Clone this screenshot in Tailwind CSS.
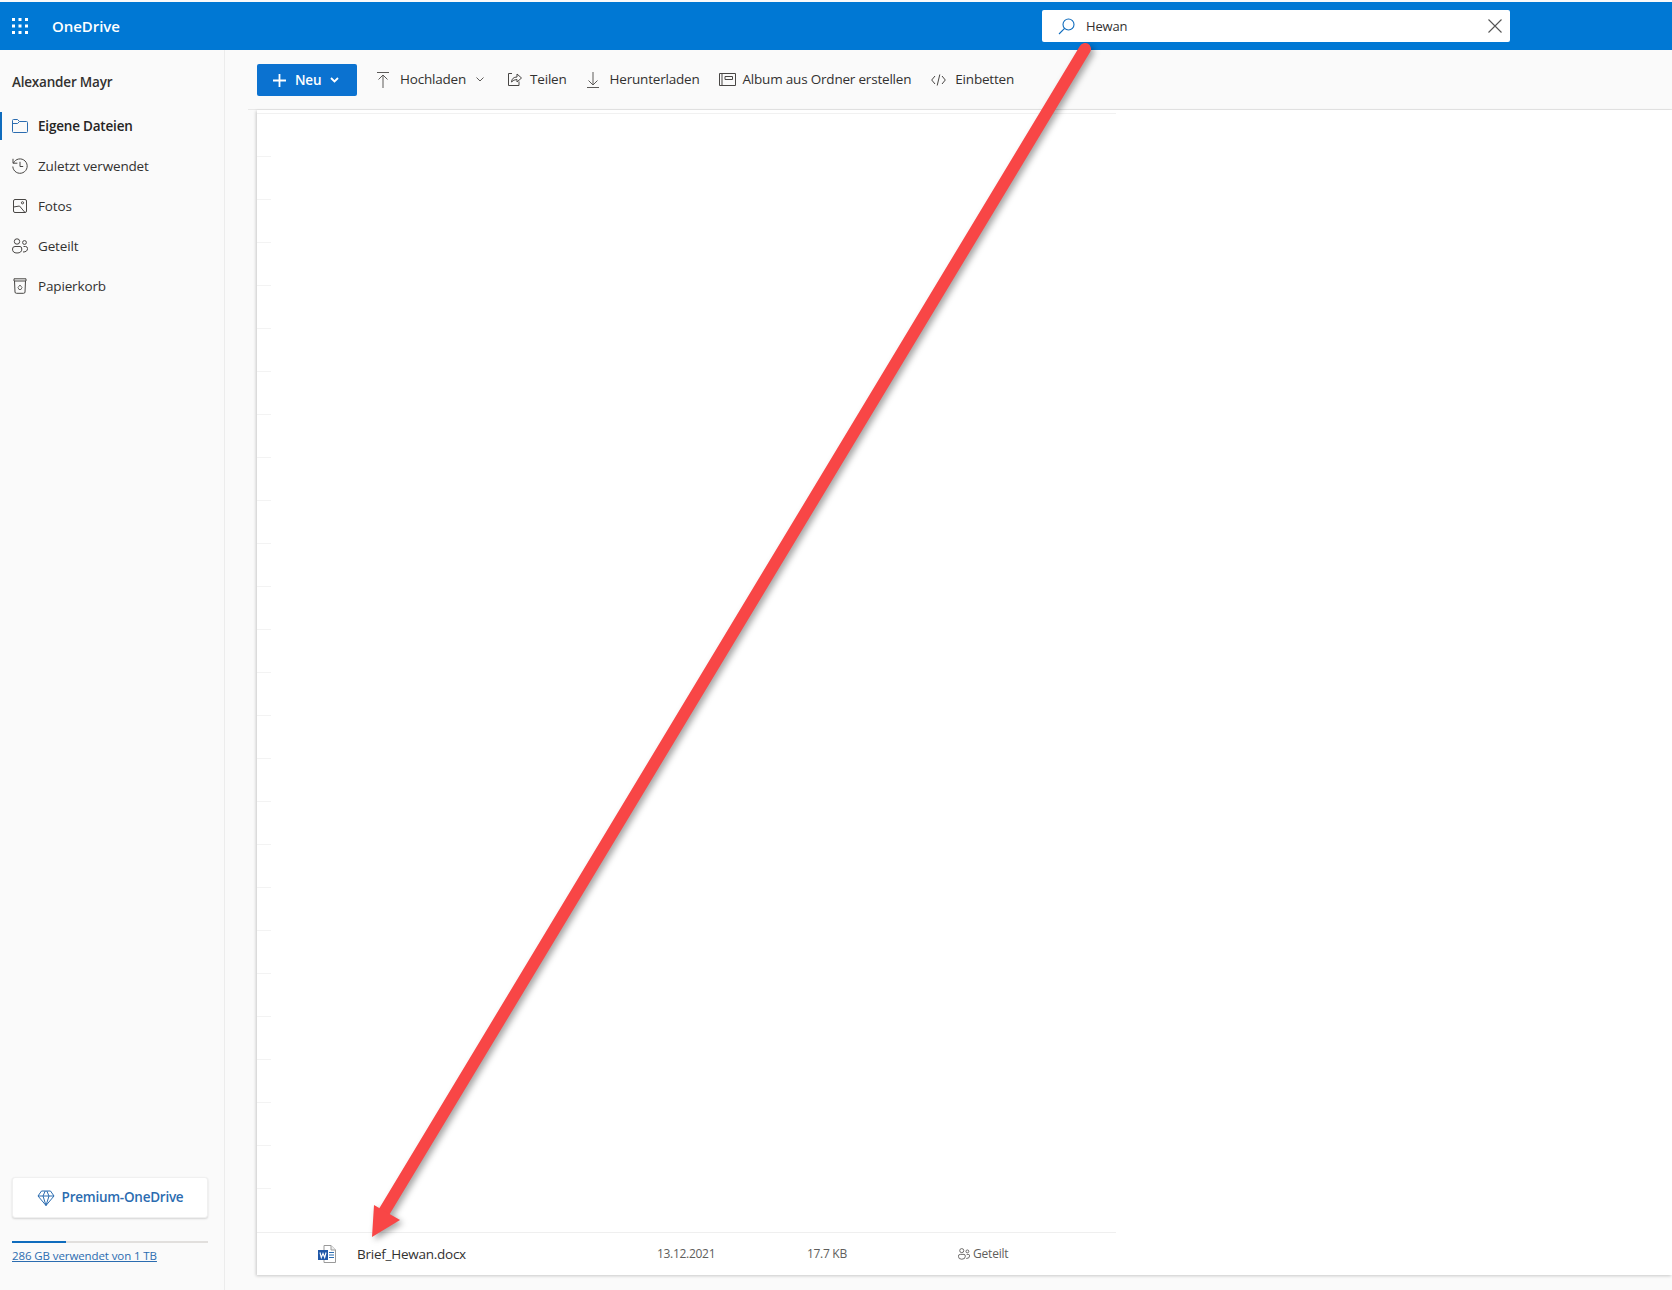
<!DOCTYPE html>
<html lang="de">
<head>
    <meta charset="UTF-8">
    <meta name="viewport" content="width=device-width, initial-scale=1.0">
    <title>OneDrive</title>
    <script src="https://cdn.jsdelivr.net/npm/@tailwindcss/browser@4"></script>
</head>
<body class="relative h-[1290px] w-[1672px] overflow-hidden bg-[#fafafa] font-['Open_Sans',sans-serif] text-[#323130]">

    <!-- header -->
    <header class="mt-[2px] flex h-[48px] items-center bg-[#0078d4] text-white">
        <svg class="ml-[12px] h-[16px] w-[16px]" viewBox="0 0 16 16" fill="#fff">
            <rect x="0" y="0" width="3" height="3"/><rect x="6.5" y="0" width="3" height="3"/><rect x="13" y="0" width="3" height="3"/>
            <rect x="0" y="6.5" width="3" height="3"/><rect x="6.5" y="6.5" width="3" height="3"/><rect x="13" y="6.5" width="3" height="3"/>
            <rect x="0" y="13" width="3" height="3"/><rect x="6.5" y="13" width="3" height="3"/><rect x="13" y="13" width="3" height="3"/>
        </svg>
        <span class="ml-[24px] w-[68px] text-[15px] font-semibold tracking-[-0.05px]">OneDrive</span>
        <div class="ml-[922px] flex h-[32px] w-[468px] items-center rounded-[2px] bg-white text-[#323130]">
            <svg class="ml-[16px] h-[17px] w-[17px]" viewBox="0 0 17 17" fill="none" stroke="#0f6cbd" stroke-width="1.1">
                <circle cx="10.5" cy="6.5" r="5.5"/><path d="M6.6 10.4 L1 16"/>
            </svg>
            <span class="ml-[11px] mt-[1px] text-[13px] tracking-[-0.15px]">Hewan</span>
            <svg class="ml-auto mr-[8px] h-[14px] w-[14px]" viewBox="0 0 14 14" fill="none" stroke="#555" stroke-width="1.1">
                <path d="M0.5 0.5 L13.5 13.5 M13.5 0.5 L0.5 13.5"/>
            </svg>
        </div>
    </header>

    <div class="flex h-[1240px]">
        <!-- sidebar -->
        <aside class="flex w-[225px] shrink-0 flex-col border-r border-[#ececec] bg-[#fafafa]">
            <div class="mt-[22px] pl-[12px] text-[13.5px] font-semibold leading-[20px] tracking-[-0.2px]">Alexander Mayr</div>
            <nav class="mt-[14px] flex flex-col text-[13.5px] tracking-[-0.15px]">
                <a class="flex h-[40px] items-center font-semibold tracking-[-0.2px] text-[#252423]">
                    <span class="h-[28px] w-[2px] bg-[#0f6cbd]"></span>
                    <svg class="ml-[10px] h-[16px] w-[16px]" viewBox="0 0 16 16" fill="none" stroke="#2b6cb0" stroke-width="1">
                        <path d="M0.5 13.5 V2.5 Q0.5 1.5 1.5 1.5 H5.5 L7.5 3.5 H14.5 Q15.5 3.5 15.5 4.5 V13.5 Q15.5 14.5 14.5 14.5 H1.5 Q0.5 14.5 0.5 13.5 Z M0.5 5.5 H5.5 L7.5 3.5"/>
                    </svg>
                    <span class="ml-[10px]">Eigene Dateien</span>
                </a>
                <a class="flex h-[40px] items-center pl-[12px]">
                    <svg class="h-[16px] w-[16px]" viewBox="0 0 16 16" fill="none" stroke="#484644" stroke-width="1">
                        <path d="M1.4 5.2 A7.2 7.2 0 1 1 0.8 8.5 M1 0.8 V5.2 H5.4 M8 3.8 V8.5 H11.2"/>
                    </svg>
                    <span class="ml-[10px]">Zuletzt verwendet</span>
                </a>
                <a class="flex h-[40px] items-center pl-[12px]">
                    <svg class="h-[16px] w-[16px]" viewBox="0 0 16 16" fill="none" stroke="#484644" stroke-width="1">
                        <rect x="1.5" y="1.5" width="13" height="13" rx="1.5"/><circle cx="10.5" cy="4.8" r="1.1"/><path d="M1.5 9 L7.5 8 L13 14.5"/>
                    </svg>
                    <span class="ml-[10px]">Fotos</span>
                </a>
                <a class="flex h-[40px] items-center pl-[12px]">
                    <svg class="h-[16px] w-[16px]" viewBox="0 0 16 16" fill="none" stroke="#484644" stroke-width="1">
                        <circle cx="5" cy="3.5" r="2.7"/><circle cx="12.5" cy="4.5" r="1.9"/>
                        <path d="M0.5 11 Q0.5 8.5 3 8.5 H8 Q9.8 8.5 9.8 11 Q9.8 15 5 15 Q0.5 15 0.5 11 Z M11.5 8.5 H13.5 Q15.5 8.5 15.5 10.5 Q15.5 14 11 14"/>
                    </svg>
                    <span class="ml-[10px]">Geteilt</span>
                </a>
                <a class="flex h-[40px] items-center pl-[12px]">
                    <svg class="h-[16px] w-[16px]" viewBox="0 0 16 16" fill="none" stroke="#484644" stroke-width="1">
                        <path d="M2 0.8 H14 V3 H2 Z M2.5 3 L3 14 Q3 15.3 4.5 15.3 H11.5 Q13 15.3 13 14 L13.5 3"/>
                        <path d="M6 9.5 L8 7 L10 9.5 L9 11.5 H7 Z" stroke-width="0.8"/>
                    </svg>
                    <span class="ml-[10px]">Papierkorb</span>
                </a>
            </nav>
            <div class="mt-auto pl-[12px] pr-[16px] pb-[26px]">
                <div class="flex h-[41px] items-center justify-center rounded-[3px] border border-[#f0f0f0] bg-white text-[13.5px] font-semibold tracking-[-0.25px] text-[#2b6cb0] shadow-[0_1px_2px_rgba(0,0,0,0.15)]">
                    <svg class="mr-[7px] h-[18px] w-[18px]" viewBox="0 0 18 18" fill="none" stroke="#2b6cb0" stroke-width="1">
                        <path d="M4.5 2 H13.5 L17 7 L9 16.5 L1 7 Z M1 7 H17 M6 7 L9 16.5 L12 7 L9.8 2 M6 7 L8.2 2"/>
                    </svg>
                    Premium-OneDrive
                </div>
                <div class="mt-[23px] h-[2px] bg-[#e1dfdd]"><div class="h-[2px] w-[54px] bg-[#0f6cbd]"></div></div>
                <a class="mt-[5px] block text-[11.5px] leading-[16px] tracking-[-0.1px] text-[#2b6cb0] underline">286 GB verwendet von 1 TB</a>
            </div>
        </aside>

        <!-- main -->
        <main class="flex min-w-0 flex-1 flex-col">
            <div class="ml-[23px] flex h-[60px] items-center border-b border-[#e8e8e8] bg-[#fafafa] text-[13.5px] tracking-[-0.2px]">
                <button class="ml-[9px] mt-[1px] flex h-[32px] w-[100px] items-center rounded-[2px] bg-[#0b72d0] font-semibold text-white">
                    <svg class="ml-[16px] h-[13px] w-[13px]" viewBox="0 0 13 13" stroke="#fff" stroke-width="1.8"><path d="M6.5 0 V13 M0 6.5 H13"/></svg>
                    <span class="ml-[9px]">Neu</span>
                    <svg class="ml-[9px] h-[6px] w-[9px]" viewBox="0 0 9 6" fill="none" stroke="#fff" stroke-width="1.8"><path d="M1 1 L4.5 4.5 L8 1"/></svg>
                </button>
                <svg class="ml-[20px] h-[16px] w-[12px]" viewBox="0 0 12 16" fill="none" stroke="#5c5a58" stroke-width="1"><path d="M0 .5 H12 M6 16 V3 M1.5 7.5 L6 3 L10.5 7.5"/></svg>
                <span class="ml-[11px]">Hochladen</span>
                <svg class="ml-[10px] h-[5px] w-[8px]" viewBox="0 0 8 5" fill="none" stroke="#5c5a58" stroke-width="1"><path d="M.5 .5 L4 4 L7.5 .5"/></svg>
                <svg class="ml-[23px] h-[15px] w-[15px]" viewBox="0 0 15 15" fill="none" stroke="#484644" stroke-width="1"><path d="M5 1.5 H1.5 V13.5 H12 V9.5 M4.5 10 Q5 5 10 5 V2 L14.5 6 L10 10 V7.5 Q6.5 7.5 4.5 10 Z"/></svg>
                <span class="ml-[8px]">Teilen</span>
                <svg class="ml-[20px] h-[16px] w-[12px]" viewBox="0 0 12 16" fill="none" stroke="#5c5a58" stroke-width="1"><path d="M0 15.5 H12 M6 0 V13 M1.5 8.5 L6 13 L10.5 8.5"/></svg>
                <span class="ml-[11px]">Herunterladen</span>
                <svg class="ml-[19px] h-[13px] w-[17px]" viewBox="0 0 17 13" fill="none" stroke="#484644" stroke-width="1"><path d="M.5 .5 H16.5 V12.5 H.5 Z M3 .5 V12.5 M6 3.5 H13.5 V6.5 H6 Z"/></svg>
                <span class="ml-[7px]">Album aus Ordner erstellen</span>
                <svg class="ml-[20px] h-[12px] w-[15px]" viewBox="0 0 15 12" fill="none" stroke="#484644" stroke-width="1"><path d="M4 2 L.7 6 L4 10 M11 2 L14.3 6 L11 10 M8.8 .5 L6.2 11.5"/></svg>
                <span class="ml-[9px]">Einbetten</span>
            </div>

            <div class="ml-[32px] flex h-[1165px] flex-col bg-white shadow-[-1px_1px_3px_rgba(0,0,0,0.2)]">
                <div id="lines" class="mt-[3px] flex h-[1119px] w-[859px] flex-col border-t border-[#f1f1f1]"></div>
                <div class="flex h-[43px] w-[859px] items-center border-t border-[#efefef] text-[12px] tracking-[-0.3px] text-[#605e5c]">
                    <svg class="ml-[61px] h-[18px] w-[18px]" viewBox="0 0 18 18">
                        <path d="M6 .5 H13 L17.5 5 V17.5 H6 Z" fill="#fff" stroke="#9a9a9a"/>
                        <path d="M13 .5 V5 H17.5" fill="#eee" stroke="#9a9a9a"/>
                        <path d="M11 7.5 H16 M11 10 H16 M11 12.5 H16" stroke="#2b6cb0"/>
                        <rect x="0" y="5" width="10" height="10" fill="#1f57a8"/>
                        <path d="M2 7.5 L3.3 12.5 L5 8.5 L6.7 12.5 L8 7.5" fill="none" stroke="#fff" stroke-width="1.1"/>
                    </svg>
                    <span class="ml-[21px] w-[300px] text-[13.5px] tracking-[-0.25px] text-[#323130]">Brief_Hewan.docx</span>
                    <span class="w-[150px]">13.12.2021</span>
                    <span class="w-[151px]">17.7 KB</span>
                    <svg class="h-[12px] w-[12px]" viewBox="0 0 16 16" fill="none" stroke="#605e5c" stroke-width="1.2">
                        <circle cx="5" cy="3.5" r="2.7"/><circle cx="12.5" cy="4.5" r="1.9"/>
                        <path d="M0.5 11 Q0.5 8.5 3 8.5 H8 Q9.8 8.5 9.8 11 Q9.8 15 5 15 Q0.5 15 0.5 11 Z M11.5 8.5 H13.5 Q15.5 8.5 15.5 10.5 Q15.5 14 11 14"/>
                    </svg>
                    <span class="ml-[3px] tracking-[-0.2px]">Geteilt</span>
                </div>
            </div>
        </main>
    </div>

    <!-- annotation arrow drawn over the page -->
    <svg class="pointer-events-none absolute left-0 top-0 h-[1290px] w-[1672px] drop-shadow-[3px_3px_3px_rgba(0,0,0,0.35)]" viewBox="0 0 1672 1290" fill="#f84646">
        <path d="M1085 49 L384 1212" fill="none" stroke="#f84646" stroke-width="12" stroke-linecap="round"/>
        <path d="M372 1237 L374 1205 L400 1220 Z"/>
    </svg>

    <script>
        // faint row stubs down the left of the empty list
        const lines = document.getElementById("lines");
        for (let i = 0; i < 25; i++) {
            lines.innerHTML += `<div class="mt-[42px] h-px w-[14px] shrink-0 bg-[#f3f3f3]"></div>`;
        }
    </script>
</body>
</html>
